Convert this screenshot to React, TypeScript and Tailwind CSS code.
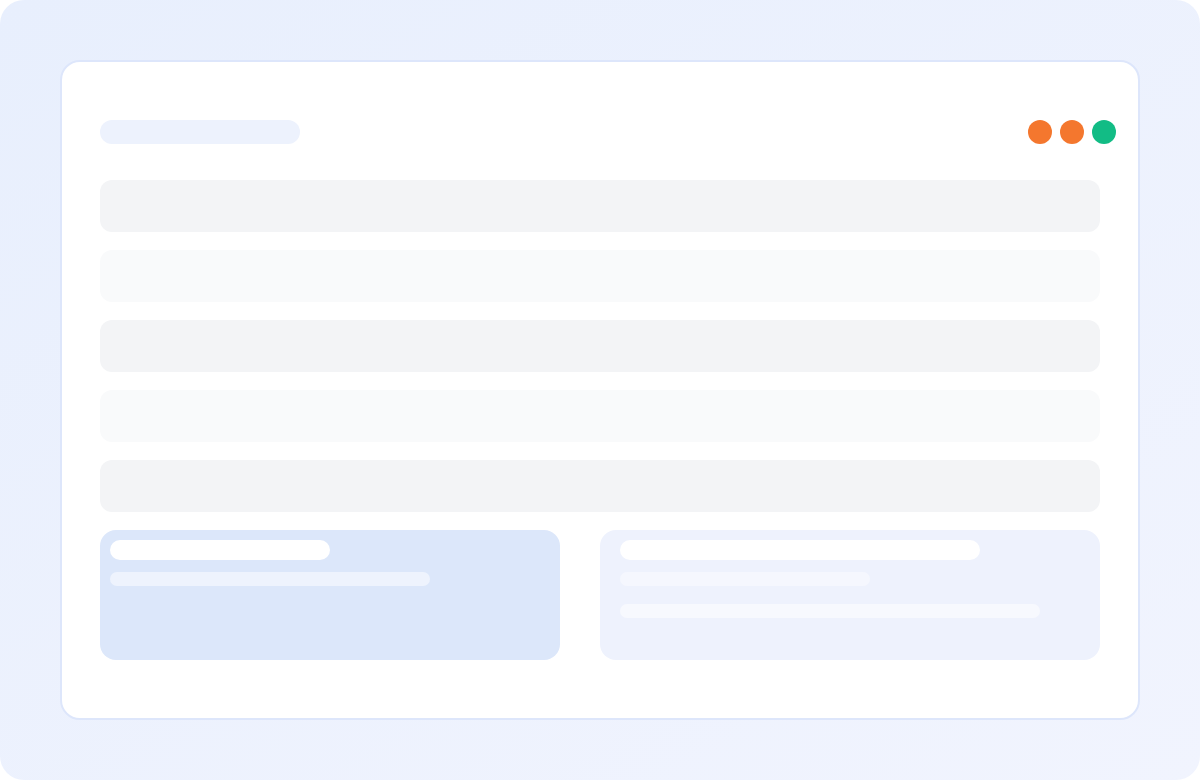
import React from "react";

export default function App() {
  const rows = ["bg-[#f3f4f6]", "bg-[#f9fafb]", "bg-[#f3f4f6]", "bg-[#f9fafb]", "bg-[#f3f4f6]"];
  return (
    <div className="w-[1200px] h-[780px] bg-white font-['Inter',sans-serif]">
      <div className="w-full h-full rounded-[24px] bg-gradient-to-br from-[#e8effd] to-[#f1f4fe] p-[60px]">
        <div className="w-full h-full bg-white rounded-[20px] border-2 border-[#dde6fb] px-[38px] pt-[58px]">
          <div className="flex items-center justify-between h-[24px] -mr-[16px]">
            <div className="w-[200px] h-[24px] rounded-full bg-[#edf2fd]" />
            <div className="flex gap-[8px]">
              <div className="w-[24px] h-[24px] rounded-full bg-[#f4772e]" />
              <div className="w-[24px] h-[24px] rounded-full bg-[#f4772e]" />
              <div className="w-[24px] h-[24px] rounded-full bg-[#12bc85]" />
            </div>
          </div>
          <div className="mt-[36px] flex flex-col gap-[18px]">
            {rows.map((c, i) => (
              <div key={i} className={`h-[52px] rounded-[12px] ${c}`} />
            ))}
          </div>
          <div className="mt-[18px] flex gap-[40px]">
            <div className="w-[460px] h-[130px] rounded-[16px] bg-[#dce7fa] px-[10px] pt-[10px]">
              <div className="w-[220px] h-[20px] rounded-full bg-white" />
              <div className="mt-[12px] w-[320px] h-[14px] rounded-full bg-[#eef3fd]" />
            </div>
            <div className="w-[500px] h-[130px] rounded-[16px] bg-[#eef2fd] px-[20px] pt-[10px]">
              <div className="w-[360px] h-[20px] rounded-full bg-white" />
              <div className="mt-[12px] w-[250px] h-[14px] rounded-full bg-[#f5f7fe]" />
              <div className="mt-[18px] w-[420px] h-[14px] rounded-full bg-[#f7f9fe]" />
            </div>
          </div>
        </div>
      </div>
    </div>
  );
}
